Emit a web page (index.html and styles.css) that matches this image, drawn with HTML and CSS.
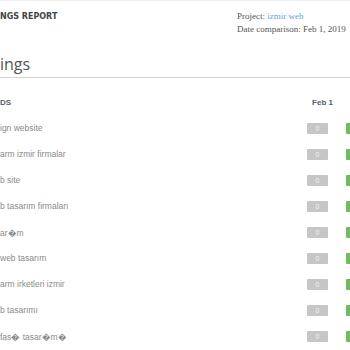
FILE: index.html
```html
<!DOCTYPE html>
<html>
<head>
<meta charset="utf-8">
<link rel="stylesheet" href="styles.css">
</head>
<body>
<div class="page">
  <header class="report-head">
    <div class="report-title">NGS REPORT</div>
    <div class="report-meta">
      <div>Project: <a class="meta-link">izmir web</a></div>
      <div>Date comparison: Feb 1, 2019</div>
    </div>
  </header>
  <h1 class="section-title">ings</h1>
  <div class="table">
    <div class="row head">
      <div class="kw-head">DS</div>
      <div class="date-head">Feb 1</div>
      <div></div>
    </div>
    <div class="row"><div class="kw">ign website</div><div class="cell"><span class="badge gray">0</span></div><div class="cell"><span class="badge green"></span></div></div>
    <div class="row"><div class="kw">arm izmir firmalar</div><div class="cell"><span class="badge gray">0</span></div><div class="cell"><span class="badge green"></span></div></div>
    <div class="row"><div class="kw">b site</div><div class="cell"><span class="badge gray">0</span></div><div class="cell"><span class="badge green"></span></div></div>
    <div class="row"><div class="kw">b tasarım firmaları</div><div class="cell"><span class="badge gray">0</span></div><div class="cell"><span class="badge green"></span></div></div>
    <div class="row"><div class="kw">ar�m</div><div class="cell"><span class="badge gray">0</span></div><div class="cell"><span class="badge green"></span></div></div>
    <div class="row"><div class="kw">web tasarım</div><div class="cell"><span class="badge gray">0</span></div><div class="cell"><span class="badge green"></span></div></div>
    <div class="row"><div class="kw">arm irketleri izmir</div><div class="cell"><span class="badge gray">0</span></div><div class="cell"><span class="badge green"></span></div></div>
    <div class="row"><div class="kw">b tasarımı</div><div class="cell"><span class="badge gray">0</span></div><div class="cell"><span class="badge green"></span></div></div>
    <div class="row"><div class="kw">fas� tasar�m�</div><div class="cell"><span class="badge gray">0</span></div><div class="cell"><span class="badge green"></span></div></div>
  </div>
</div>
</body>
</html>
```
FILE: styles.css
```css
html, body {
  margin: 0;
  padding: 0;
  background: #fff;
  overflow: hidden;
}
body {
  width: 350px;
  height: 350px;
}
.page {
  width: 381px;
  border-top: 1px solid #eeeeee;
}
.report-head {
  display: grid;
  grid-template-columns: 237px 1fr;
  padding-top: 9px;
}
.report-title {
  font-family: "DejaVu Sans", sans-serif;
  font-weight: bold;
  font-size: 8px;
  line-height: 13px;
  color: #444;
}
.report-meta {
  font-family: "Liberation Serif", serif;
  font-size: 9px;
  line-height: 13px;
  color: #555;
  white-space: nowrap;
}
.meta-link {
  color: #5ea7d8;
}
.section-title {
  margin: 18px 0 0;
  padding-bottom: 3px;
  font-family: "Open Sans", sans-serif;
  font-weight: 400;
  font-size: 16px;
  line-height: 20px;
  color: #555;
  border-bottom: 1px solid #d2d2d2;
}
.table {
  margin-top: 14px;
}
.row {
  display: grid;
  grid-template-columns: 1fr 39px 39px;
  align-items: center;
  height: 26px;
}
.row.head {
  height: 20px;
  margin-bottom: 3px;
}
.kw-head, .date-head {
  font-family: "Liberation Sans", sans-serif;
  font-weight: bold;
  font-size: 8px;
  color: #556072;
}
.date-head {
  text-align: center;
}
.kw {
  font-family: "Liberation Sans", sans-serif;
  font-size: 8.5px;
  color: #8a8a8a;
  white-space: nowrap;
}
.cell {
  padding-left: 4px;
}
.badge {
  display: block;
  width: 21px;
  height: 11px;
  line-height: 11px;
  text-align: center;
  font-family: "Liberation Sans", sans-serif;
  font-size: 7px;
  color: #f2f2f2;
  border-radius: 1px;
}
.badge.gray {
  background: #c6c6c6;
}
.badge.green {
  background: #6cbf58;
}
```
